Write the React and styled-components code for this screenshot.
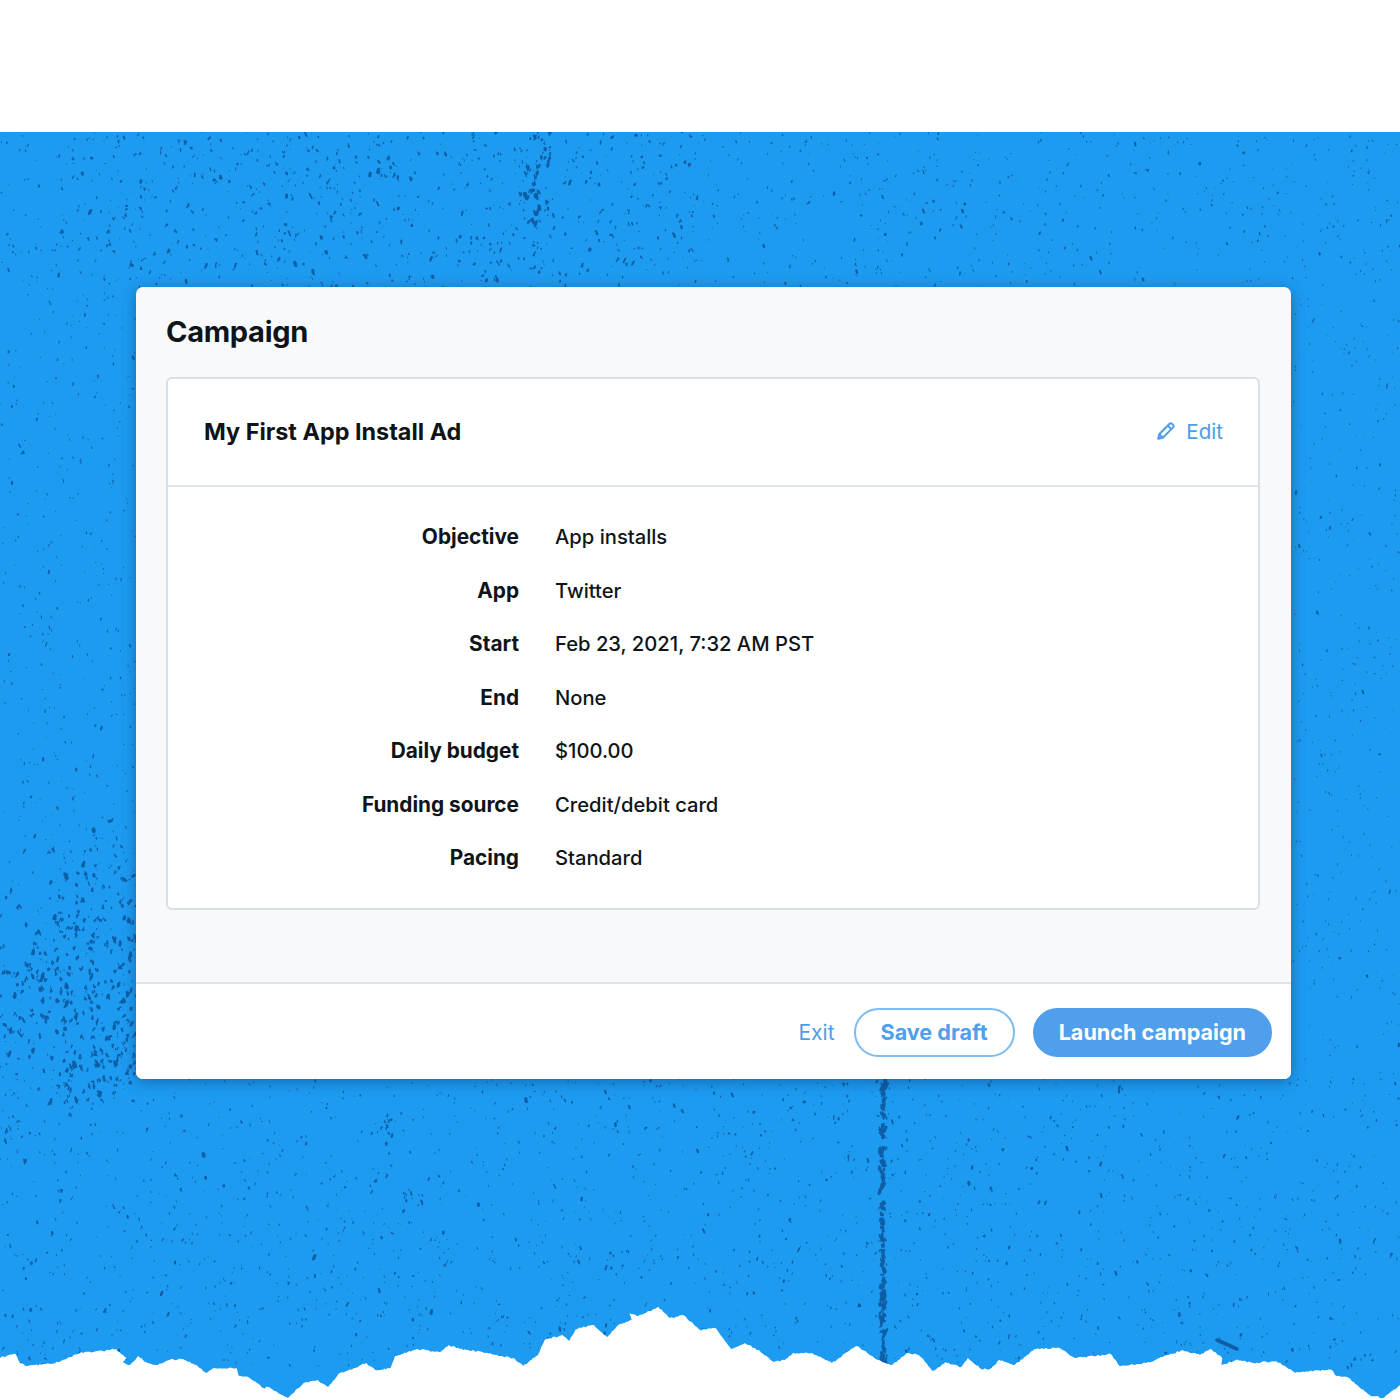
import React from 'react';
import styled, { createGlobalStyle } from 'styled-components';

// seeded so the paper texture comes out the same on each render
const makeRandom = (seed) => () => {
  seed = (seed + 0x6d2b79f5) | 0;
  let t = Math.imul(seed ^ (seed >>> 15), 1 | seed);
  t = (t + Math.imul(t ^ (t >>> 7), 61 | t)) ^ t;
  return ((t ^ (t >>> 14)) >>> 0) / 4294967296;
};

const blob = (x, y, rx, ry, rot) =>
  `M${(x - rx).toFixed(1)} ${y.toFixed(1)}a${rx.toFixed(1)} ${ry.toFixed(1)} ${rot} 1 0 ${(rx * 2).toFixed(1)} 0a${rx.toFixed(1)} ${ry.toFixed(1)} ${rot} 1 0 ${(-rx * 2).toFixed(1)} 0z`;

const buildSpeckles = () => {
  const rnd = makeRandom(42);
  const gauss = () => (rnd() + rnd() + rnd() - 1.5) / 0.5;
  let d = '';
  const spot = (x, y, size) => {
    const big = rnd() < 0.1 ? 1.8 : 1;
    d += blob(x, y, (0.4 + rnd() * 0.5) * size * big, (0.6 + rnd() * 0.9) * size * big, Math.round(rnd() * 70 - 35));
  };
  // a few spots touching, so dense areas read as ink rather than dots
  const clump = (x, y, size, parts) => {
    let cx = x;
    let cy = y;
    for (let i = 0; i < parts; i++) {
      spot(cx, cy, size);
      cx += (rnd() - 0.5) * size * 3.2;
      cy += (rnd() - 0.5) * size * 3.2;
    }
  };
  const area = (x, y, w, h, count, size, parts = 1) => {
    for (let i = 0; i < count; i++) clump(x + rnd() * w, y + rnd() * h, size, parts);
  };
  const cluster = (x, y, sx, sy, count, size, parts = 1) => {
    for (let i = 0; i < count; i++) clump(x + gauss() * sx, y + gauss() * sy, size, parts);
  };

  area(0, 132, 1400, 155, 1050, 0.8);
  area(60, 132, 640, 155, 330, 1, 2);
  area(0, 287, 136, 800, 480, 0.75);
  area(1291, 287, 109, 800, 340, 0.7);
  area(0, 1079, 1400, 290, 1900, 0.8);
  area(0, 1079, 1400, 290, 110, 1, 2);

  cluster(535, 195, 6, 24, 24, 1.4, 3);
  cluster(545, 145, 4, 12, 8, 1.2, 2);
  cluster(75, 985, 50, 62, 300, 1.15, 3);
  cluster(110, 900, 20, 30, 40, 1, 2);
  cluster(115, 1060, 20, 18, 36, 1.1, 3);
  cluster(388, 1135, 3, 12, 10, 1.1, 2);
  cluster(883, 1225, 1, 140, 190, 1.35, 3);

  return d;
};

// tear traced from the crops: x is in crop pixels, y already on the page
const traceLeft = [
  [0, 1358], [20, 1355], [35, 1354], [45, 1363], [60, 1366], [100, 1364], [115, 1364], [130, 1362], [155, 1357],
  [190, 1352], [230, 1351], [260, 1349], [275, 1355], [285, 1358], [275, 1362], [290, 1365], [310, 1356],
  [325, 1362], [350, 1365], [380, 1360], [410, 1359], [440, 1365], [462, 1373], [480, 1368], [530, 1368],
  [535, 1376], [555, 1377], [590, 1388], [600, 1387], [645, 1398], [680, 1383], [710, 1380], [735, 1387],
  [760, 1373], [790, 1369], [820, 1363], [840, 1370], [875, 1368], [885, 1356], [935, 1349], [985, 1352],
  [1005, 1345], [1030, 1349], [1080, 1352], [1120, 1356], [1150, 1358], [1172, 1366], [1205, 1355], [1220, 1340],
  [1260, 1335], [1275, 1341], [1290, 1329], [1330, 1325], [1360, 1337], [1385, 1325], [1415, 1320], [1410, 1313],
  [1430, 1316], [1475, 1307], [1500, 1318], [1530, 1315], [1568, 1330],
];

const traceRight = [
  [35, 1328], [70, 1349], [100, 1343], [130, 1350], [165, 1362], [190, 1360], [210, 1353], [250, 1353],
  [295, 1363], [350, 1346], [400, 1360], [430, 1365], [465, 1353], [490, 1355], [522, 1371], [550, 1362],
  [585, 1367], [600, 1358], [630, 1369], [650, 1369], [670, 1360], [705, 1365], [750, 1349], [805, 1348],
  [840, 1358], [920, 1354], [940, 1366], [1000, 1363], [1080, 1350], [1120, 1355], [1145, 1349], [1170, 1358],
  [1168, 1365], [1200, 1360], [1240, 1363], [1290, 1361], [1330, 1372], [1415, 1370], [1425, 1376],
  [1450, 1377], [1500, 1395], [1530, 1398], [1568, 1385],
];

const buildEdge = () => {
  const rnd = makeRandom(7);
  const pts = [
    ...traceLeft.map(([x, y]) => [x / 2.24, y]),
    ...traceRight.map(([x, y]) => [700 + x / 2.24, y]),
  ];
  let d = 'M0 1400L' + pts[0].join(' ');
  for (let i = 1; i < pts.length; i++) {
    const [ax, ay] = pts[i - 1];
    const [bx, by] = pts[i];
    const steps = Math.max(1, Math.round(Math.abs(bx - ax) / 1.6));
    for (let s = 1; s <= steps; s++) {
      const t = s / steps;
      const jitter = s === steps ? 0 : (rnd() - 0.5) * 1.6;
      d += `L${(ax + (bx - ax) * t).toFixed(1)} ${(ay + (by - ay) * t + jitter).toFixed(1)}`;
    }
  }
  return d + 'L1400 1400z';
};

const SPECKLES = buildSpeckles();
const TORN_EDGE = buildEdge();

const rows = [
  ['Objective', 'App installs'],
  ['App', 'Twitter'],
  ['Start', 'Feb 23, 2021, 7:32 AM PST'],
  ['End', 'None'],
  ['Daily budget', '$100.00'],
  ['Funding source', 'Credit/debit card'],
  ['Pacing', 'Standard'],
];

const App = () => {
  return (
    <>
      <GlobalStyle />
      <Page>
        <Hero>
          <Paper viewBox="0 132 1400 1268" aria-hidden="true">
            <path d={SPECKLES} fill="#0e5ea6" />
            <line x1="1217" y1="1340" x2="1237" y2="1349" stroke="#0e5ea6" strokeWidth="3.6" strokeLinecap="round" />
            <path d={TORN_EDGE} fill="#fff" />
          </Paper>
          <Card>
            <Body>
              <Title>Campaign</Title>
              <Panel>
                <PanelHeader>
                  <PanelTitle>My First App Install Ad</PanelTitle>
                  <EditLink>
                    <svg width="20" height="20" viewBox="0 0 20 20" fill="none" stroke="currentColor" strokeWidth="2" strokeLinejoin="round">
                      <path d="M2.2 17.8l1-4.6L13.6 2.8a1.6 1.6 0 0 1 2.3 0l1.3 1.3a1.6 1.6 0 0 1 0 2.3L6.8 16.8z" />
                      <path d="M11.8 4.6l3.6 3.6" />
                      <path d="M3.2 13.2l3.6 3.6" />
                    </svg>
                    Edit
                  </EditLink>
                </PanelHeader>
                <Details>
                  {rows.map(([label, value]) => (
                    <React.Fragment key={label}>
                      <Label>{label}</Label>
                      <Value>{value}</Value>
                    </React.Fragment>
                  ))}
                </Details>
              </Panel>
            </Body>
            <Footer>
              <ExitLink>Exit</ExitLink>
              <PillButton>Save draft</PillButton>
              <PillButton $primary>Launch campaign</PillButton>
            </Footer>
          </Card>
        </Hero>
      </Page>
    </>
  );
};

// STYLES
const GlobalStyle = createGlobalStyle`
  body {
    margin: 0;
    background: #fff;
    font-family: Inter, "Liberation Sans", sans-serif;
    color: #0f1419;
  }
`;

const Page = styled.div`
  padding-top: 132px;
`;

const Hero = styled.div`
  position: relative;
  height: 1268px;
  padding: 155px 109px 0 136px;
  box-sizing: border-box;
  background: #1d9bf1;
  overflow: hidden;
`;

const Paper = styled.svg`
  position: absolute;
  inset: 0;
  width: 100%;
  height: 100%;
`;

const Card = styled.div`
  position: relative;
  height: 792px;
  display: flex;
  flex-direction: column;
  border-radius: 7px;
  overflow: hidden;
  background: #f7f9fa;
  box-shadow: 0 3px 14px rgba(8, 50, 100, 0.45);
`;

const Body = styled.div`
  flex: 1;
  padding: 0 31px 0 30px;
`;

const Title = styled.h1`
  margin: 0;
  height: 90px;
  padding: 0 0 2px;
  box-sizing: border-box;
  display: flex;
  align-items: center;
  font-size: 29px;
  font-weight: 700;
  letter-spacing: -0.3px;
`;

const Panel = styled.div`
  height: 533px;
  box-sizing: border-box;
  background: #fff;
  border: 2px solid #d9e0e5;
  border-radius: 6px;
`;

const PanelHeader = styled.div`
  height: 108px;
  box-sizing: border-box;
  padding: 0 35px 2px 36px;
  display: flex;
  align-items: center;
  justify-content: space-between;
  border-bottom: 2px solid #dde3e7;
`;

const PanelTitle = styled.h2`
  margin: 0;
  font-size: 23.4px;
  font-weight: 700;
`;

const EditLink = styled.a`
  display: flex;
  align-items: center;
  gap: 10px;
  font-size: 20.6px;
  color: #4c9ee8;
`;

const Details = styled.div`
  padding: 23px 0 0;
  display: grid;
  grid-template-columns: 351px 1fr;
  grid-auto-rows: 53.5px;
  column-gap: 36px;
  align-items: center;
  font-size: 20.2px;
`;

const Label = styled.div`
  text-align: right;
  font-size: 20.8px;
  font-weight: 700;
`;

const Value = styled.div`
  font-weight: 450;
`;

const Footer = styled.div`
  height: 97px;
  box-sizing: border-box;
  padding: 2px 19px 0 0;
  display: flex;
  align-items: center;
  justify-content: flex-end;
  gap: 18px;
  background: #fff;
  border-top: 2px solid #dde3e7;
`;

const ExitLink = styled.a`
  font-size: 21px;
  margin-right: 1px;
  color: #4c9ee8;
`;

const PillButton = styled.button`
  height: 49px;
  padding: 0 ${(props) => (props.$primary ? '24px' : '25px')} 2px;
  box-sizing: border-box;
  border-radius: 25px;
  border: 2px solid ${(props) => (props.$primary ? '#4f9fec' : '#7dbcf2')};
  background: ${(props) => (props.$primary ? '#4f9fec' : '#fff')};
  color: ${(props) => (props.$primary ? '#fff' : '#4f9fec')};
  font-family: inherit;
  font-size: 21.6px;
  font-weight: 700;
`;

export default App;
